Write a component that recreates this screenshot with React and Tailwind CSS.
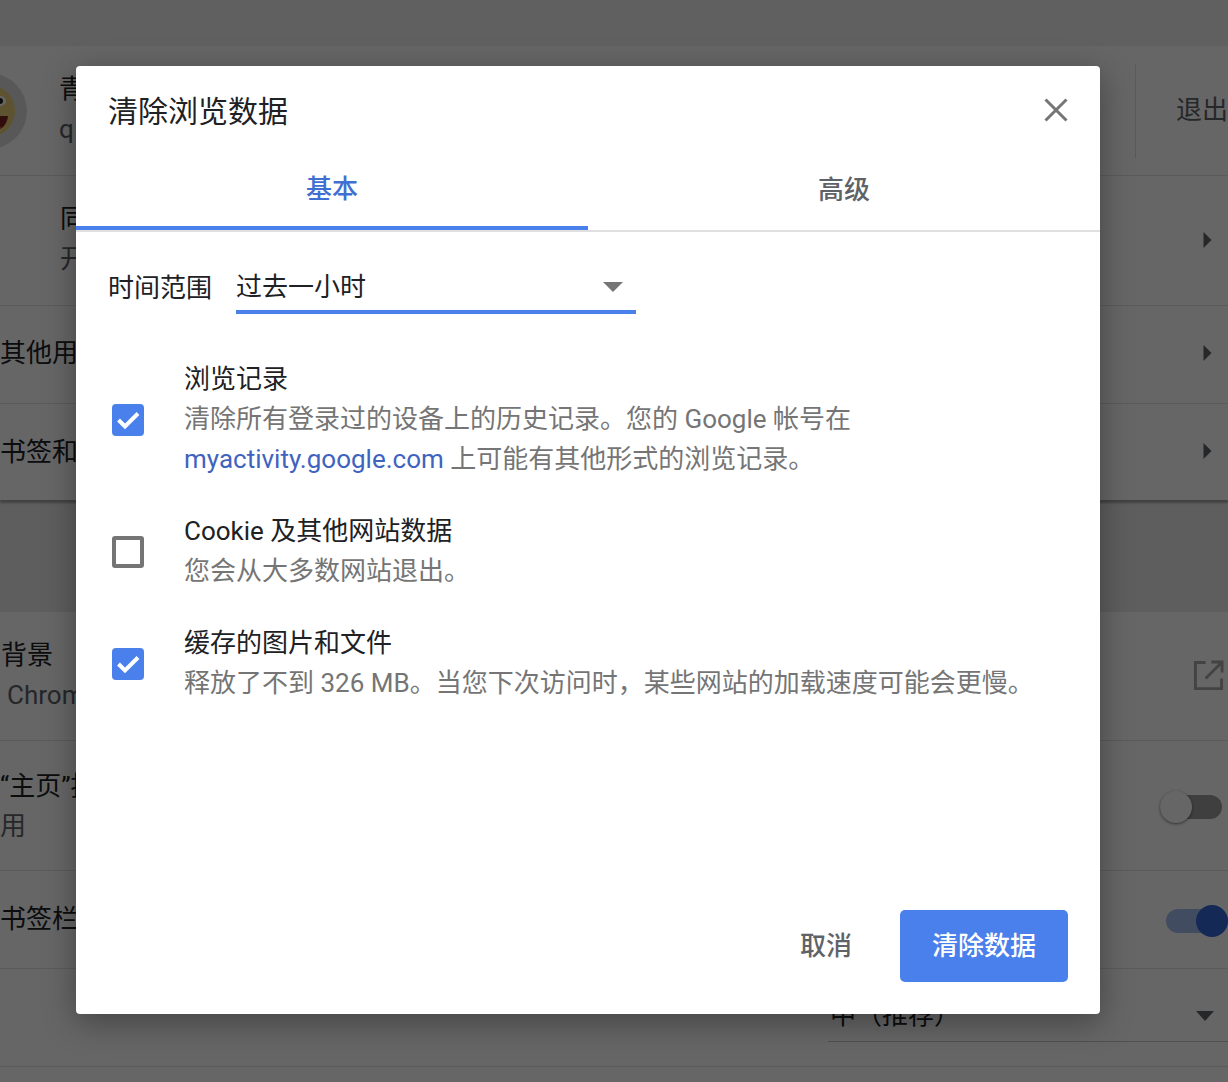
const arrow = (
  <svg width="9" height="18" viewBox="0 0 9 18" className="text-[#5f6368]">
    <path d="M0.5 1 L8.5 9 L0.5 17 Z" fill="currentColor" />
  </svg>
)

function Check({ checked }) {
  if (!checked) {
    return <div className="w-8 h-8 rounded-[3px] border-4 border-[#757575] bg-white" />
  }
  return (
    <div className="w-8 h-8 rounded-[4px] bg-[#4a80ec] flex items-center justify-center">
      <svg width="32" height="32" viewBox="0 0 32 32">
        <path d="M6.5 16 L13 22.5 L26 9.5" fill="none" stroke="#fff" strokeWidth="4" />
      </svg>
    </div>
  )
}

function Row({ height, children, border = true }) {
  return (
    <div className={`flex items-center justify-between ${height} ${border ? 'border-b border-[#e4e4e4]' : ''}`}>
      {children}
    </div>
  )
}

function TwoLines({ title, sub, className = '' }) {
  return (
    <div className={`leading-[40px] ${className}`}>
      <div className="text-[#202124] whitespace-nowrap">{title}</div>
      <div className="text-[#5f6368] whitespace-nowrap">{sub}</div>
    </div>
  )
}

function Avatar() {
  return (
    <svg width="76" height="76" viewBox="0 0 76 76" className="shrink-0 ml-[-49px]">
      <circle cx="38" cy="38" r="38" fill="#dcdcdc" />
      <circle cx="38" cy="38" r="26" fill="#e8cf7a" />
      <ellipse cx="49" cy="28" rx="6" ry="5" fill="#fff" />
      <circle cx="49" cy="28" r="3" fill="#222" />
      <path d="M30 43 H57 C56 52 50 58 42 57 C35 56 31 50 30 43 Z" fill="#7a2420" />
      <path d="M36 51 C42 48 49 50 50 55 C45 58 39 57 36 51 Z" fill="#d9503f" />
    </svg>
  )
}

function Item({ checked, title, children }) {
  return (
    <div className="flex items-center">
      <div className="w-[108px] pl-[36px] pt-[2px] shrink-0">
        <Check checked={checked} />
      </div>
      <div className="leading-[40px]">
        <div className="text-[#202124]">{title}</div>
        <div className="text-[#757575] whitespace-nowrap">{children}</div>
      </div>
    </div>
  )
}

function Dialog() {
  return (
    <div className="absolute left-[76px] top-[66px] w-[1024px] h-[948px] bg-white rounded-[4px] shadow-[0_8px_32px_rgba(0,0,0,0.35)] flex flex-col">
      <div className="flex items-center justify-between h-[88px] pl-[32px] pr-[32px] shrink-0">
        <div className="text-[30px] text-[#202124] pt-[2px]">清除浏览数据</div>
        <svg width="24" height="24" viewBox="0 0 24 24">
          <path d="M1.5 1.5 L22.5 22.5 M22.5 1.5 L1.5 22.5" stroke="#757575" strokeWidth="3" fill="none" />
        </svg>
      </div>
      <div className="flex h-[78px] border-b-2 border-[#e0e0e0] shrink-0">
        <div className="flex-1 flex items-center justify-center pb-[2px] border-b-4 border-[#4a80ec] text-[#3f6fd1] font-medium">基本</div>
        <div className="flex-1 flex items-center justify-center pb-[4px] text-[#5f6368] font-medium">高级</div>
      </div>
      <div className="flex items-start pl-[32px] pt-[32px] shrink-0">
        <div className="w-[128px] leading-[48px] text-[#202124]">时间范围</div>
        <div className="w-[400px] h-[50px] border-b-4 border-[#4a80ec] flex items-center justify-between pr-[12px] leading-[46px] text-[#202124]">
          <span>过去一小时</span>
          <svg width="20" height="10" viewBox="0 0 20 10" className="mr-[1px]">
            <path d="M0 0 H20 L10 10 Z" fill="#757575" />
          </svg>
        </div>
      </div>
      <div className="flex flex-col gap-[32px] pt-[45px] shrink-0">
        <Item checked title="浏览记录">
          <div>清除所有登录过的设备上的历史记录。您的 Google 帐号在</div>
          <div><span className="text-[#3f63bf]">myactivity.google.com</span> 上可能有其他形式的浏览记录。</div>
        </Item>
        <Item title="Cookie 及其他网站数据">您会从大多数网站退出。</Item>
        <Item checked title="缓存的图片和文件">释放了不到 326 MB。当您下次访问时，某些网站的加载速度可能会更慢。</Item>
      </div>
      <div className="flex-1 flex items-end justify-end pr-[32px] pb-[32px]">
        <div className="h-[72px] flex items-center mr-[48px] text-[#5f6368] font-medium">取消</div>
        <div className="w-[168px] h-[72px] rounded-[5px] bg-[#4a80ec] flex items-center justify-center text-white font-medium">清除数据</div>
      </div>
    </div>
  )
}

export default function App() {
  return (
    <div className="relative w-[1228px] h-[1082px] overflow-hidden bg-white text-[26px] font-['Roboto','Noto_Sans_CJK_SC',sans-serif]">
      {/* settings page behind the dialog */}
      <div className="h-[46px] bg-[#f1f1f1]" />
      <div className="shadow-[0_3px_2px_rgba(0,0,0,0.3)] relative">
        <Row height="h-[130px]">
          <div className="flex items-center gap-[32px]">
            <Avatar />
            <TwoLines title="青" sub="q" className="mt-[-4px]" />
          </div>
          <div className="flex items-center h-[94px] w-[93px] border-l border-[#e0e0e0] pl-[40px] text-[#5f6368] whitespace-nowrap">退出</div>
        </Row>
        <Row height="h-[130px]">
          <TwoLines title="同" sub="开" className="pl-[60px] mt-[-4px]" />
          <div className="pr-[16px] mt-[-2px]">{arrow}</div>
        </Row>
        <Row height="h-[98px]">
          <div className="text-[#202124] mt-[-2px]">其他用户</div>
          <div className="pr-[16px] mt-[-4px]">{arrow}</div>
        </Row>
        <Row height="h-[96px]" border={false}>
          <div className="text-[#202124]">书签和设置</div>
          <div className="pr-[16px] mt-[-2px]">{arrow}</div>
        </Row>
      </div>
      <div className="h-[112px] bg-[#ececec]" />
      <Row height="h-[129px]">
        <div className="leading-[40px] mt-[-2px]">
          <div className="text-[#202124] pl-[1px]">背景</div>
          <div className="text-[#5f6368] pl-[7px]">Chrome</div>
        </div>
        <svg width="31" height="31" viewBox="0 0 32 32" className="mr-[4px] mt-[-2px] text-[#a8a8a8]">
          <path d="M13 2.5 H2.5 V29.5 H29.5 V19 M19 2 H30 V13 M30 2 L13 19" fill="none" stroke="currentColor" strokeWidth="3" />
        </svg>
      </Row>
      <Row height="h-[130px]">
        <div className="leading-[40px]">
          <div className="text-[#202124]">“主页”按钮</div>
          <div className="text-[#5f6368]">用</div>
        </div>
        <div className="relative w-[62px] h-6 rounded-full bg-[#9e9e9e] mr-[6px] mt-[2px]">
          <div className="absolute left-0 top-[-4px] w-8 h-8 rounded-full bg-white shadow-[0_1px_3px_rgba(0,0,0,0.5)]" />
        </div>
      </Row>
      <Row height="h-[98px]">
        <div className="text-[#202124]">书签栏</div>
        <div className="relative w-[62px] h-6 rounded-full bg-[#a6bdf0] mt-[2px]">
          <div className="absolute right-0 top-[-4px] w-8 h-8 rounded-full bg-[#3367d6]" />
        </div>
      </Row>
      <div className="h-[98px] border-b border-[#e4e4e4] flex justify-end">
        <div className="w-[400px] h-[73px] border-b border-[#c8c8c8] flex items-center justify-between pl-[2px] pr-[14px] pt-[20px] text-[#202124]">
          <span>中（推荐）</span>
          <svg width="18" height="10" viewBox="0 0 18 10" className="mt-[2px]">
            <path d="M0 0 H18 L9 10 Z" fill="#5f6368" />
          </svg>
        </div>
      </div>

      {/* scrim and dialog */}
      <div className="absolute inset-0 bg-black/60" />
      <Dialog />
    </div>
  )
}
